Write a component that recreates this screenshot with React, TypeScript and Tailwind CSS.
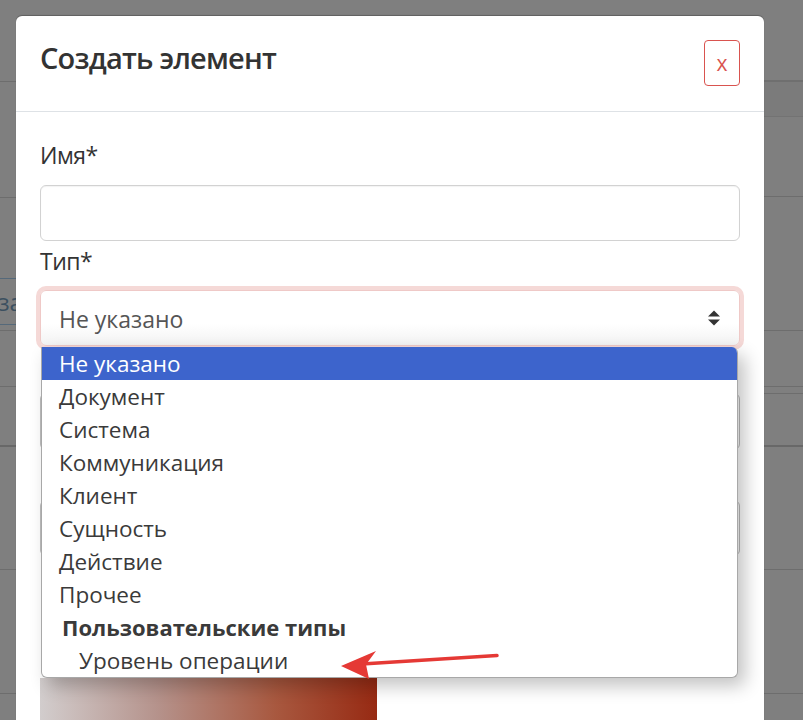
const options = [
  "Документ",
  "Система",
  "Коммуникация",
  "Клиент",
  "Сущность",
  "Действие",
  "Прочее",
];

function SortIcon() {
  return (
    <svg width="14" height="16" viewBox="0 0 14 16" className="text-[#333]">
      <path d="M7 0.5 L13 6.5 H1 Z" fill="currentColor" />
      <path d="M7 15.5 L13 9.5 H1 Z" fill="currentColor" />
    </svg>
  );
}

function BackdropPage() {
  // the page behind the dimmed overlay, only its edges show
  return (
    <div className="flex h-full justify-between">
      <div className="flex w-[16px] flex-col">
        <div className="h-[82px] shrink-0 border-b border-[#6d6d6d]" />
        <div className="h-[116px] shrink-0 border-b border-[#6d6d6d]" />
        <div className="h-[81px] shrink-0 border-b border-[#55697a]" />
        <div className="flex h-[46px] shrink-0 items-center overflow-hidden border-b border-[#55697a] text-[24px] text-[#3c5060]">
          <span className="ml-[-2px]">за</span>
        </div>
        <div className="h-[6px] shrink-0 border-b border-[#6d6d6d]" />
        <div className="h-[56px] shrink-0 border-b border-[#6d6d6d]" />
        <div className="h-[60px] shrink-0 border-b-2 border-[#686868]" />
        <div className="h-[123px] shrink-0 border-b border-[#6d6d6d]" />
        <div className="h-[124px] shrink-0 border-b border-[#6d6d6d]" />
      </div>
      <div className="flex w-[39px] flex-col">
        <div className="h-[82px] shrink-0 border-b-2 border-[#6f6f6f]" />
        <div className="h-[35px] shrink-0 border-b border-[#737373] bg-[#7b7b7b]" />
        <div className="h-[80px] shrink-0 border-b border-[#6d6d6d]" />
        <div className="h-[134px] shrink-0 border-b border-[#6d6d6d]" />
        <div className="h-[56px] shrink-0 border-b border-[#6d6d6d]" />
        <div className="h-[7px] shrink-0 border-b border-[#6d6d6d]" />
        <div className="h-[53px] shrink-0 border-b-2 border-[#686868]" />
        <div className="h-[123px] shrink-0 border-b border-[#6d6d6d]" />
        <div className="h-[124px] shrink-0 border-b border-[#6d6d6d]" />
      </div>
    </div>
  );
}

export default function App() {
  return (
    <div className="relative h-[720px] w-[803px] overflow-hidden bg-[#7f7f7f] font-['Open_Sans',sans-serif]">
      <BackdropPage />

      {/* modal */}
      <div className="absolute left-[16px] top-[16px] h-[780px] w-[748px] rounded-[6px] bg-white shadow-[0_-1px_1px_rgba(0,0,0,0.25)]">
        <div className="flex h-[96px] items-start justify-between border-b border-[#dee2e6] px-[24px] pt-[24px]">
          <h4 className="text-[29px] font-semibold leading-[36px] tracking-[-0.8px] text-[#333]">
            Создать элемент
          </h4>
          <button className="flex h-[46px] w-[36px] items-center justify-center rounded-[4px] border border-[#d9534f] text-[21px] leading-none text-[#d9534f]">
            x
          </button>
        </div>

        <div className="flex flex-col px-[24px] pt-[25px]">
          <label className="text-[23px] leading-[36px] tracking-[-0.5px] text-[#333]">Имя*</label>
          <input
            className="mt-[12px] h-[56px] w-full rounded-[6px] border border-[#d2d2d2] shadow-[inset_0_1px_1px_rgba(0,0,0,0.05)]"
            type="text"
          />

          <label className="mt-[2px] text-[23px] leading-[36px] tracking-[-0.5px] text-[#333]">Тип*</label>
          <div className="relative z-10 mt-[11px]">
            <div className="flex h-[56px] items-center justify-between rounded-[6px] border border-[#efc9c7] bg-[linear-gradient(to_bottom,#ffffff_60%,#f3f3f3)] pl-[18px] pr-[18px] pt-[3px] shadow-[0_0_0_4px_#f5d9d7]">
              <span className="text-[23px] text-[#555]">Не указано</span>
              <span className="-mt-[3px]">
                <SortIcon />
              </span>
            </div>

            {/* opened list */}
            <ul className="absolute left-[1px] right-[2px] top-[57px] overflow-hidden rounded-b-[6px] rounded-tr-[6px] border border-t-0 border-[#a8a8a8] bg-white text-[22.5px] text-[#3a3a3a] shadow-[7px_8px_18px_rgba(0,0,0,0.24)]">
              <li className="flex h-[33px] items-center bg-[#3d64cc] pl-[17px] text-white">
                Не указано
              </li>
              {options.map((o) => (
                <li key={o} className="flex h-[33px] items-center pl-[17px]">
                  {o}
                </li>
              ))}
              <li className="flex h-[33px] items-center pl-[20px] text-[22px] font-bold">
                Пользовательские типы
              </li>
              <li className="flex h-[33px] items-center pl-[37px]">Уровень операции</li>
            </ul>
          </div>

          {/* rest of the form, hidden behind the list */}
          <div className="mt-[47px] h-[57px] rounded-[6px] border border-[#bdbdbd]" />
          <div className="mt-[6px] h-[36px]" />
          <div className="mt-[8px] h-[56px] rounded-[6px] border border-[#bdbdbd]" />
          <div className="mt-[10px] h-[36px]" />
          <div className="mt-[76px] h-[120px] w-[337px] bg-[linear-gradient(to_right,#d2cdcd,#b5928b_35%,#a8583f_70%,#972a13)]" />
        </div>
      </div>

      {/* annotation arrow */}
      <svg
        className="pointer-events-none absolute left-0 top-0 z-20"
        width="803"
        height="720"
        viewBox="0 0 803 720"
      >
        <line
          x1="497"
          y1="655.5"
          x2="362"
          y2="664"
          stroke="#e53935"
          strokeWidth="3.5"
          strokeLinecap="round"
        />
        <polygon points="341,666 376,651 366,664.5 369,679" fill="#e53935" />
      </svg>
    </div>
  );
}
